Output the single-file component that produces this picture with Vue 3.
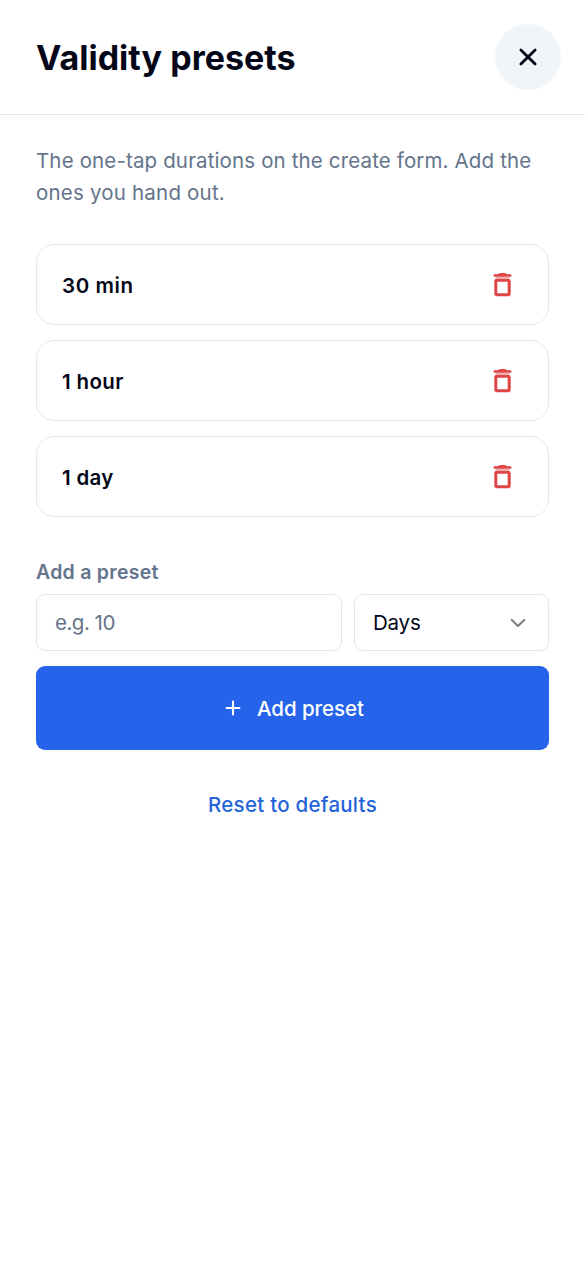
<script setup>
const presets = ['30 min', '1 hour', '1 day']
</script>

<template>
  <main class="sheet">
    <header class="header">
      <h1><span class="t-title">Validity presets</span></h1>
      <button class="close" aria-label="Close">
        <svg width="20" height="20" viewBox="0 0 20 20"><path d="M2.9 2.9 17.1 17.1M17.1 2.9 2.9 17.1" /></svg>
      </button>
    </header>
    <section class="body">
      <p class="intro"><span class="t-one">The one-tap durations on the create form. Add the</span><br /><span class="t-two">ones you hand out.</span></p>
      <ul class="list">
        <li v-for="(p, i) in presets" :key="p" class="card">
          <span :class="'t-p' + i">{{ p }}</span>
          <button class="trash" :aria-label="'Delete ' + p">
            <svg width="20" height="27" viewBox="0 0 20 27">
              <path class="lid" d="M2.8 4.6H18.2" />
              <path class="knob" d="M5 4Q7 2 8.6 2H12.4Q14 2 16 4Z" />
              <rect x="3.8" y="9.3" width="13.4" height="14.5" rx="1.2" />
              <path class="seam" d="M4 6.7H17" />
            </svg>
          </button>
        </li>
      </ul>
      <div class="label"><span class="t-label">Add a preset</span></div>
      <div class="fields">
        <div class="field amount"><span class="t-eg">e.g. 10</span></div>
        <div class="field unit">
          <span class="t-days">Days</span>
          <svg width="16" height="10" viewBox="0 0 16 10"><path d="M1.8 2 8 8 14.2 2" /></svg>
        </div>
      </div>
      <button class="add">
        <svg width="16" height="16" viewBox="0 0 16 16"><path d="M8 1.6V14.4M1.6 8H14.4" /></svg>
        <span class="t-add">Add preset</span>
      </button>
      <button class="reset"><span class="t-reset">Reset to defaults</span></button>
    </section>
  </main>
</template>

<style>
body { background: #fff; }
</style>

<style scoped>
.sheet {
  box-sizing: border-box;
  min-height: 1266px;
  font-family: Inter, "Liberation Sans", sans-serif;
  font-size: 20.5px;
  color: #020617;
  background: #fff;
}
button { border: 0; padding: 0; background: none; font: inherit; color: inherit; }
span { white-space: nowrap; }
svg { display: block; fill: none; stroke: currentColor; stroke-linecap: round; stroke-linejoin: round; }
.header {
  box-sizing: border-box;
  height: 115px;
  padding: 24px 24px 0 36px;
  display: flex;
  justify-content: space-between;
  align-items: flex-start;
  border-bottom: 1px solid #e2e5ea;
}
h1 { margin: 14px 0 0; font-size: 34px; line-height: 40px; font-weight: 700; }
.t-title { letter-spacing: 0.03px; }
.t-one { letter-spacing: 0.14px; }
.t-two { letter-spacing: 0.2px; }
.t-p0 { letter-spacing: 0.6px; }
.t-p1 { letter-spacing: 0.35px; }
.t-p2 { letter-spacing: 0.3px; }
.t-label { letter-spacing: 0.27px; }
.t-eg { letter-spacing: -0.5px; }
.t-days { letter-spacing: -0.2px; }
.t-add { letter-spacing: -0.05px; }
.t-reset { letter-spacing: 0.25px; }
.close {
  width: 66px;
  height: 66px;
  border-radius: 50%;
  background: #f1f5f9;
  display: flex;
  align-items: center;
  justify-content: center;
}
.close svg { stroke-width: 2.8; }
.body { padding: 30px 36px 0; display: flex; flex-direction: column; }
.intro { margin: 0; line-height: 32px; color: #64748b; }
.list { list-style: none; margin: 35px 0 0; padding: 0; display: flex; flex-direction: column; gap: 15px; }
.card {
  box-sizing: border-box;
  height: 81px;
  padding: 0 36px 0 25px;
  border: 1px solid #e5e7eb;
  border-radius: 18px;
  display: flex;
  align-items: center;
  justify-content: space-between;
  font-weight: 600;
}
.card > span { padding-top: 2px; }
.trash { color: #e04444; }
.trash svg { stroke-width: 3; }
.trash .lid { stroke-width: 2.5; }
.trash .knob { fill: currentColor; stroke: none; }
.trash .seam { stroke-width: 1.6; opacity: 0.45; }
.label { margin-top: 42px; height: 26px; line-height: 26px; font-size: 19.5px; font-weight: 600; color: #64748b; }
.fields { margin-top: 9px; display: grid; grid-template-columns: 306px 195px; gap: 12px; }
.field {
  box-sizing: border-box;
  height: 57px;
  border: 1px solid #e2e5ea;
  border-radius: 9px;
  padding: 0 22px 0 18px;
  display: flex;
  align-items: center;
  justify-content: space-between;
}
.amount { color: #64748b; }
.unit svg { color: #808080; stroke-width: 2.2; }
.add {
  margin-top: 15px;
  height: 84px;
  padding-left: 4px;
  border-radius: 9px;
  background: #2563eb;
  color: #fff;
  font-weight: 500;
  display: flex;
  align-items: center;
  justify-content: center;
  gap: 16px;
}
.add span { padding-top: 1px; }
.add svg { stroke-width: 2.1; }
.reset { align-self: center; margin-top: 42px; height: 26px; line-height: 26px; font-weight: 500; color: #2563d9; }
</style>
